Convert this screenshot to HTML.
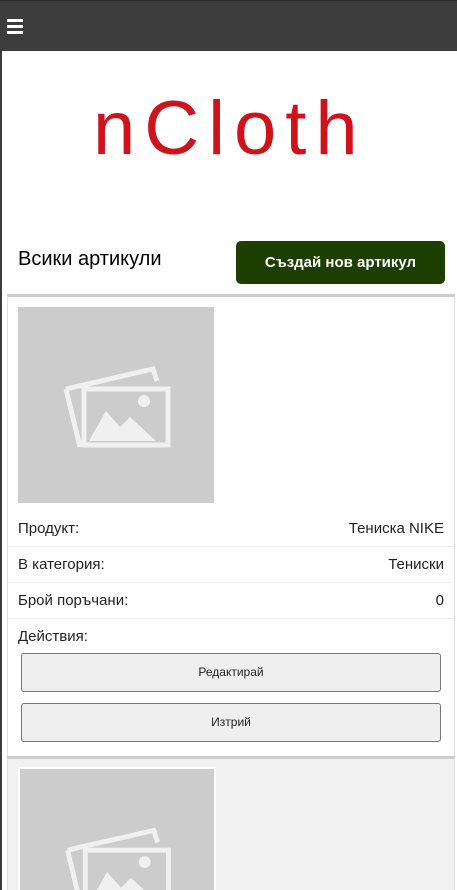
<!DOCTYPE html>
<html><head><meta charset="utf-8">
<style>
*{margin:0;padding:0;box-sizing:border-box}
html,body{width:457px;height:890px;overflow:hidden}
body{background:#3d3d3d;font-family:"Liberation Sans","DejaVu Sans",sans-serif;position:relative}
.top{position:absolute;left:0;top:0;width:457px;height:51px;background:#3d3d3d;border-top:1px solid #2a2a2a}
.ham{position:absolute;left:7px;width:16px;height:3px;background:#fff}
.main{position:absolute;left:2px;top:51px;width:455px;height:839px;background:#fff;overflow:hidden}
.logo{position:absolute;left:91px;top:40px;font-size:76px;color:#d0121b;letter-spacing:9px;line-height:1}
.h{position:absolute;left:16px;top:248px;font-size:20px;color:#000}
.btn{position:absolute;left:234px;top:190px;width:209px;height:43px;background:#1c3f00;border-radius:5px;color:#fff;font-weight:bold;font-size:15px;text-align:center;line-height:43px}
.card{position:absolute;left:5px;width:448px;border:1px solid #e0e0e0;border-top:3px solid #ccc;overflow:hidden}
.img{position:absolute;left:10px;width:196px;height:196px;background:#ccc;overflow:hidden}
.row{position:absolute;left:0;width:446px;height:36px;border-bottom:1px solid #eee;font-size:15px;color:#222;line-height:36px;padding:0 10px}
.row span{float:right}
.ab{position:absolute;left:13px;width:420px;height:39px;background:#efefef;border:1px solid #777;border-radius:3px;text-align:center;line-height:37px;font-size:12px;color:#222}
</style></head><body>
<div class="top"><div class="ham" style="top:18px"></div><div class="ham" style="top:24px"></div><div class="ham" style="top:30px"></div></div>
<div class="main">
<div class="logo">nCloth</div>
<div class="h" style="top:197px">Всики артикули</div>
<div class="btn">Създай нов артикул</div>
<div class="card" style="top:243px;height:465px">
<div class="img" style="top:10px"><svg width="196" height="196" viewBox="0 0 196 196"><g fill="none" stroke="#f0f0f0" stroke-width="5"><path d="M48 82 L135 62 L139 74"/><path d="M48 82 L62 140"/></g><rect x="66" y="82" width="84" height="56" fill="none" stroke="#f0f0f0" stroke-width="5"/><circle cx="126" cy="94" r="6" fill="#f0f0f0"/><path d="M71 134 L88 104 L102 120 L112 110 L138 134 Z" fill="#f0f0f0"/></svg></div>
<div class="row" style="top:214px">Продукт:<span>Тениска NIKE</span></div>
<div class="row" style="top:250px">В категория:<span>Тениски</span></div>
<div class="row" style="top:286px">Брой поръчани:<span>0</span></div>
<div class="row" style="top:322px;border:none">Действия:</div>
<div class="ab" style="top:356px">Редактирай</div>
<div class="ab" style="top:406px">Изтрий</div>
</div>
<div class="card" style="top:705px;height:134px;background:#f1f1f1;border-bottom:none">
<div class="img" style="top:8px;border:2px solid #fff;border-bottom:none;width:198px;height:123px"><svg width="194" height="194" viewBox="0 0 196 196"><g fill="none" stroke="#f0f0f0" stroke-width="5"><path d="M48 82 L135 62 L139 74"/><path d="M48 82 L62 140"/></g><rect x="66" y="82" width="84" height="56" fill="none" stroke="#f0f0f0" stroke-width="5"/><circle cx="126" cy="94" r="6" fill="#f0f0f0"/><path d="M71 134 L88 104 L102 120 L112 110 L138 134 Z" fill="#f0f0f0"/></svg></div>
</div>
</div>
</body></html>
